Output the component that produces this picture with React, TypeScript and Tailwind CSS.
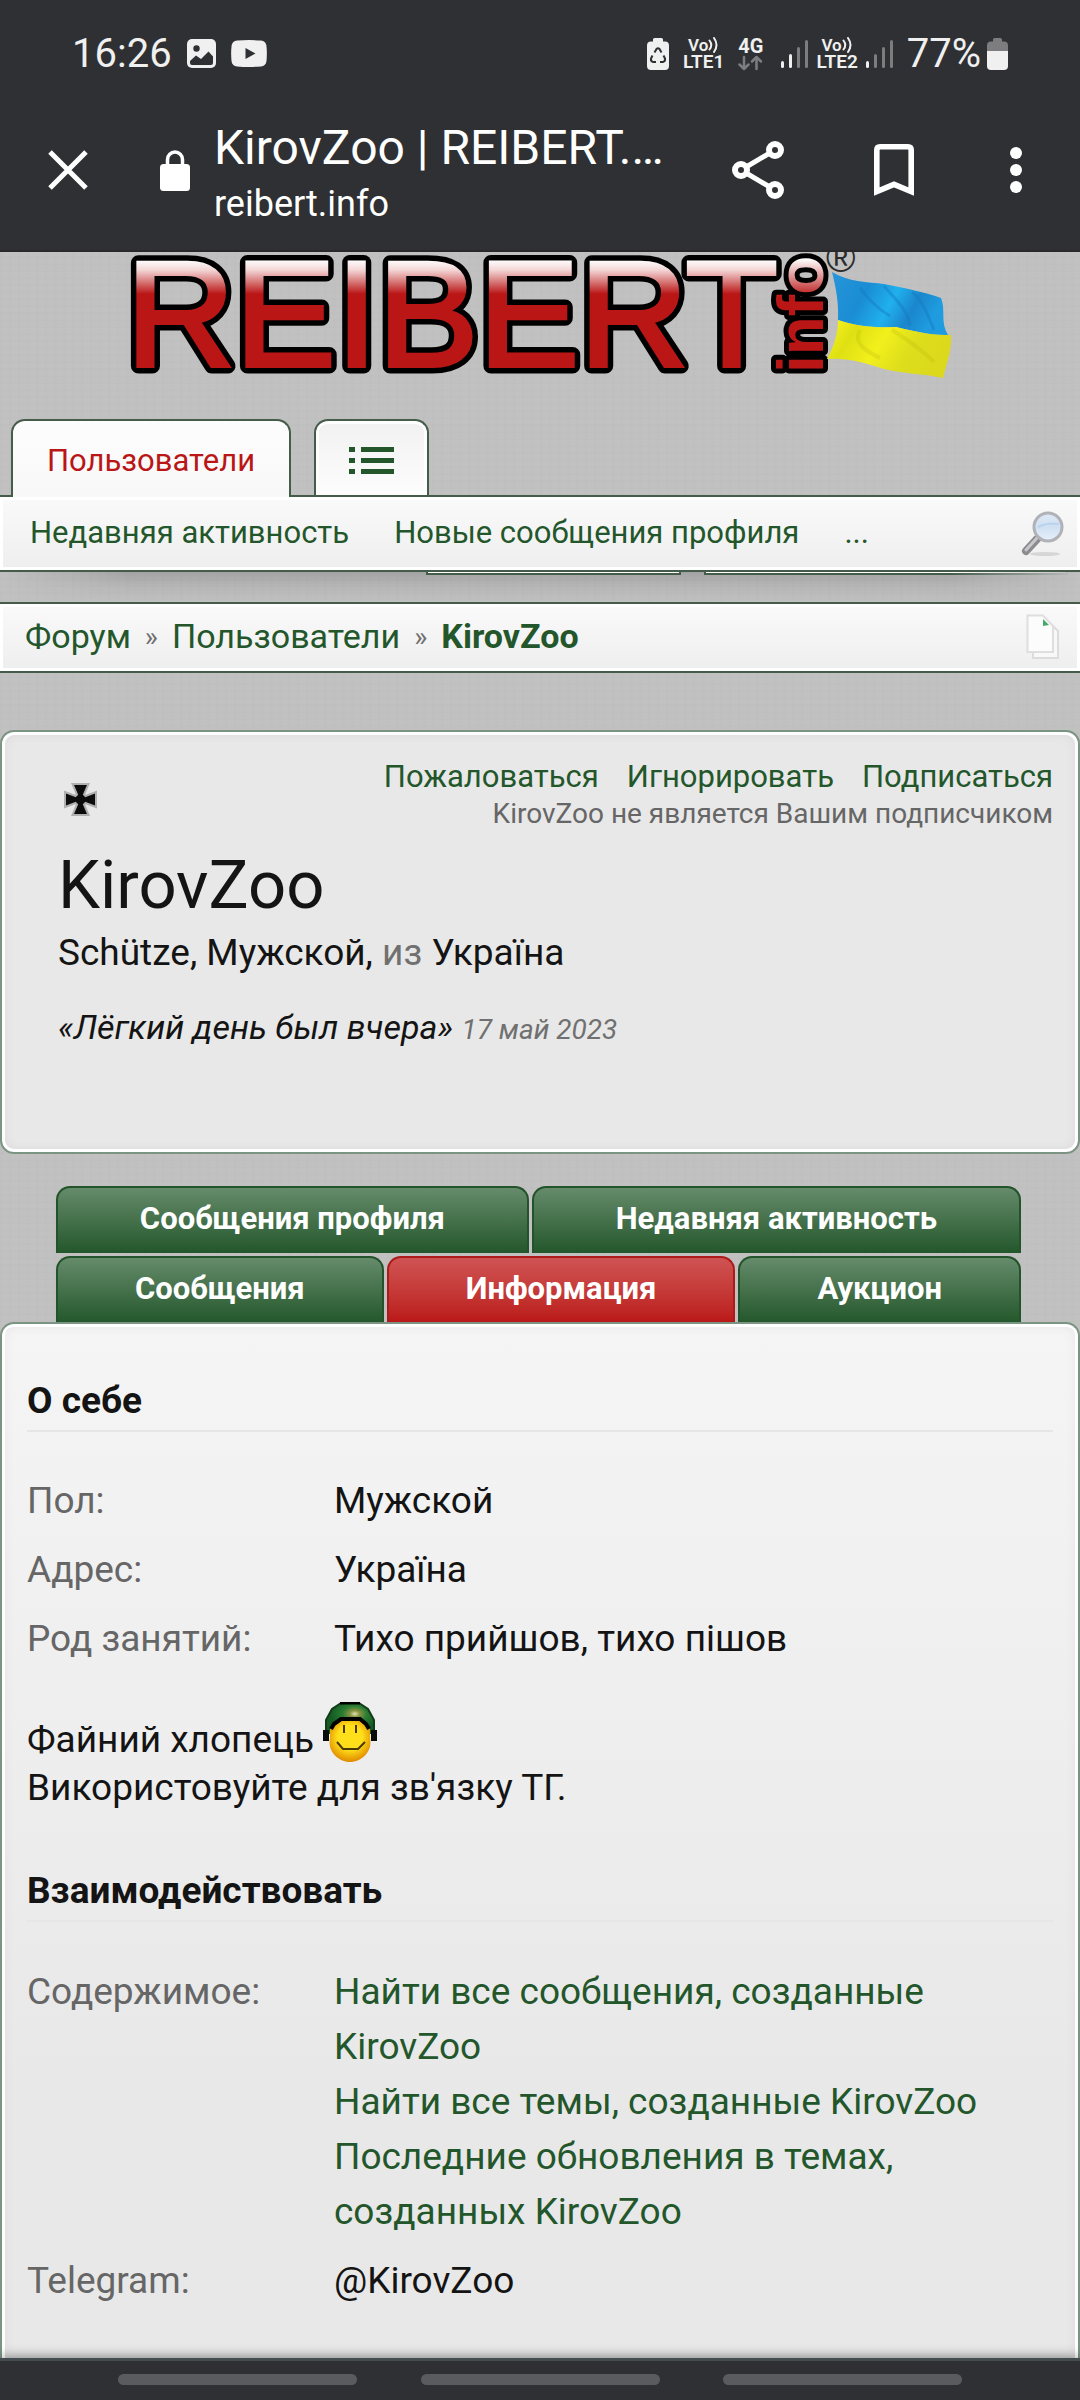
import React from "react";

const profileTabs = [
  [
    { label: "Сообщения профиля", active: false },
    { label: "Недавняя активность", active: false },
  ],
  [
    { label: "Сообщения", active: false },
    { label: "Информация", active: true },
    { label: "Аукцион", active: false },
  ],
];

const aboutRows = [
  { label: "Пол:", value: "Мужской" },
  { label: "Адрес:", value: "Україна" },
  { label: "Род занятий:", value: "Тихо прийшов, тихо пішов" },
];

const contentLinks = [
  "Найти все сообщения, созданные KirovZoo",
  "Найти все темы, созданные KirovZoo",
  "Последние обновления в темах, созданных KirovZoo",
];

function Signal({ level }: { level: number }) {
  return (
    <svg width="27" height="30" viewBox="0 0 27 30">
      {[8, 15, 22, 29].map((h, i) => (
        <rect
          key={h}
          x={i * 8}
          y={30 - h}
          width="3"
          height={h - 1}
          rx="1.5"
          fill={i < level ? "#f0f0f0" : "#7d7d7f"}
        />
      ))}
    </svg>
  );
}

function VoLte({ sim }: { sim: number }) {
  return (
    <div className="flex flex-col items-center font-semibold text-[#f0f0f0]">
      <span className="flex items-center text-[17px] leading-4">
        Vo
        <svg width="11" height="16" viewBox="0 0 11 16">
          <path
            d="M1.500 3.500 Q5 8 1.500 12.500 M6 1 Q11 8 6 15"
            fill="none"
            stroke="#f0f0f0"
            strokeWidth="2"
            strokeLinecap="round"
          />
        </svg>
      </span>
      <span className="text-[19px] leading-[18px]">LTE{sim}</span>
    </div>
  );
}

function StatusBar() {
  return (
    <div className="flex h-[107px] items-center justify-between px-[72px] text-[40px] text-[#f0f0f0]">
      <div className="flex items-center gap-[15px]">
        <span>16:26</span>
        <svg width="29" height="29" viewBox="0 0 29 29">
          <rect width="29" height="29" rx="5" fill="#f0f0f0" />
          <circle cx="9.5" cy="9.5" r="3.2" fill="#2f3033" />
          <path
            d="M3 22 L9 16.5 L14 20 L21.5 12.5 L26 17.5 V24 Q26 26 24 26 H5 Q3 26 3 24 Z"
            fill="#2f3033"
          />
        </svg>
        <svg width="36" height="27" viewBox="0 0 36 27">
          <path
            d="M6 .6 Q18 -.4 30 .6 Q34.6 1 35.4 5.500 Q36.300 13.500 35.400 21.500 Q34.600 26 30 26.400 Q18 27.400 6 26.400 Q1.400 26 .6 21.500 Q-.3 13.500 .6 5.500 Q1.400 1 6 .6 Z"
            fill="#f0f0f0"
          />
          <path d="M14.500 8 L24.500 13.500 L14.500 19 Z" fill="#2f3033" />
        </svg>
      </div>
      <div className="flex items-center gap-[14px]">
        <svg width="22" height="32" viewBox="0 0 22 32">
          <path
            d="M6 3.500 V1.500 Q6 0 7.500 0 H14.500 Q16 0 16 1.500 V3.500 H18 Q22 3.500 22 7.500 V28 Q22 32 18 32 H4 Q0 32 0 28 V7.500 Q0 3.500 4 3.500 Z"
            fill="#f0f0f0"
          />
          <g
            fill="none"
            stroke="#2f3033"
            strokeWidth="2"
            strokeLinejoin="round"
          >
            <path d="M7.500 14.500 L9.500 11 Q11 9.500 12.500 11 L14.500 14.500" />
            <path d="M16.500 17.500 L18 20.500 Q18.500 23.500 16 24 H13" />
            <path d="M5.500 17.500 L4 20.500 Q3.500 23.500 6 24 H9" />
          </g>
        </svg>
        <VoLte sim={1} />
        <div className="mr-1 flex flex-col items-center text-[20px] leading-[18px] font-bold">
          <span>4G</span>
          <svg width="25" height="16" viewBox="0 0 25 16">
            <g
              fill="none"
              stroke="#7d7d7f"
              strokeWidth="2.500"
              strokeLinecap="round"
              strokeLinejoin="round"
            >
              <path d="M6 2 V14 M1.500 9.500 L6 14 L10.500 9.500" />
              <path d="M18.500 14 V2 M14 6.500 L18.500 2 L23 6.500" />
            </g>
          </svg>
        </div>
        <div className="flex items-center gap-2">
          <Signal level={2} />
          <VoLte sim={2} />
          <Signal level={1} />
        </div>
        <div className="flex items-center gap-1.5">
          <span>77%</span>
          <svg width="21" height="32" viewBox="0 0 21 32">
            <path
              d="M6 3.500 V1.500 Q6 0 7.500 0 H13.500 Q15 0 15 1.500 V3.500 H17 Q21 3.500 21 7.500 V13 H0 V7.500 Q0 3.500 4 3.500 Z"
              fill="#7d7d7f"
            />
            <path
              d="M0 13 H21 V28 Q21 32 17 32 H4 Q0 32 0 28 Z"
              fill="#f0f0f0"
            />
          </svg>
        </div>
      </div>
    </div>
  );
}

function BrowserBar() {
  return (
    <div className="flex h-[126px] items-center pr-[46px] pl-12">
      <button type="button" aria-label="Закрыть">
        <svg width="40" height="40" viewBox="0 0 40 40">
          <path
            d="M2 2 L38 38 M38 2 L2 38"
            stroke="#fff"
            strokeWidth="5"
            fill="none"
          />
        </svg>
      </button>
      <svg
        className="ml-[72px] shrink-0"
        width="30"
        height="41"
        viewBox="0 0 30 41"
      >
        <rect y="14" width="30" height="27" rx="3.500" fill="#fff" />
        <path
          d="M7.500 15 V9.500 A7.500 7.500 0 0 1 22.500 9.500 V15"
          fill="none"
          stroke="#fff"
          strokeWidth="3.500"
        />
      </svg>
      <div className="ml-6 min-w-0 pt-1.5 text-white">
        <div className="text-[48px] leading-[56px] whitespace-nowrap">
          KirovZoo | REIBERT.…
        </div>
        <div className="mt-1.5 text-[36px] leading-11">reibert.info</div>
      </div>
      <div className="ml-auto flex items-center">
        <button type="button" aria-label="Поделиться">
          <svg width="52" height="58" viewBox="0 0 52 58">
            <g fill="none" stroke="#fff">
              <path d="M43 9 L9 29 L43 49" strokeWidth="5" />
              <g fill="#2f3033" strokeWidth="6">
                <circle cx="43" cy="9" r="6" />
                <circle cx="9" cy="29" r="6" />
                <circle cx="43" cy="49" r="6" />
              </g>
            </g>
          </svg>
        </button>
        <button type="button" aria-label="Закладка" className="ml-[90px]">
          <svg width="40" height="52" viewBox="0 0 40 52">
            <path
              d="M2.800 47.500 V6 Q2.800 2.800 6 2.800 H34 Q37.200 2.800 37.200 6 V47.500 L20 40.300 Z"
              fill="none"
              stroke="#fff"
              strokeWidth="5.600"
            />
          </svg>
        </button>
        <button
          type="button"
          aria-label="Меню"
          className="ml-[84px] flex w-9 justify-center"
        >
          <svg width="12" height="46" viewBox="0 0 12 46">
            <circle cx="6" cy="6" r="6" fill="#fff" />
            <circle cx="6" cy="23" r="6" fill="#fff" />
            <circle cx="6" cy="40" r="6" fill="#fff" />
          </svg>
        </button>
      </div>
    </div>
  );
}

function Logo() {
  return (
    <svg
      className="mx-auto block max-w-full"
      width="830"
      height="132"
      viewBox="125 252 830 132"
      fontFamily="'Liberation Sans', Arial, sans-serif"
      role="img"
      aria-label="REIBERT.info"
    >
      <defs>
        <linearGradient
          id="logo-red"
          gradientUnits="userSpaceOnUse"
          x1="0"
          y1="260"
          x2="0"
          y2="294"
        >
          <stop offset="0" stopColor="#fff" />
          <stop offset="0.300" stopColor="#f3d4d4" />
          <stop offset="1" stopColor="#ba1616" />
        </linearGradient>
        <linearGradient
          id="info-red"
          gradientUnits="userSpaceOnUse"
          x1="76"
          y1="0"
          x2="114"
          y2="0"
        >
          <stop offset="0" stopColor="#ba1616" />
          <stop offset="1" stopColor="#fff" />
        </linearGradient>
        <linearGradient id="flag-blue" x1="0" y1="0" x2="1" y2="0.300">
          <stop offset="0" stopColor="#2795d8" />
          <stop offset="0.350" stopColor="#1a8dd4" />
          <stop offset="0.600" stopColor="#20b0ee" />
          <stop offset="0.800" stopColor="#1b86cc" />
          <stop offset="1" stopColor="#1f9ce0" />
        </linearGradient>
        <linearGradient id="flag-yellow" x1="0" y1="0" x2="1" y2="0.300">
          <stop offset="0" stopColor="#fbf71e" />
          <stop offset="0.250" stopColor="#dfe013" />
          <stop offset="0.500" stopColor="#f2f01c" />
          <stop offset="0.750" stopColor="#dede1c" />
          <stop offset="1" stopColor="#dcd91c" />
        </linearGradient>
      </defs>
      <g fontSize="151">
        <text
          x="126"
          y="366"
          fill="#000"
          stroke="#000"
          strokeWidth="15"
          strokeLinejoin="round"
        >
          REIBERT
        </text>
        <text
          x="126"
          y="366"
          fill="url(#logo-red)"
          stroke="url(#logo-red)"
          strokeWidth="4"
          strokeLinejoin="miter"
        >
          REIBERT
        </text>
      </g>
      <g
        transform="translate(823 373)"
        fontSize="64"
        fontWeight="bold"
        strokeLinejoin="round"
      >
        <g transform="rotate(-90)">
          <text fill="#000" stroke="#000" strokeWidth="10">
            info
          </text>
          <text fill="url(#info-red)">info</text>
        </g>
      </g>
      <text x="826" y="272" fontSize="40" fill="#2b2b2b">
        ®
      </text>
      <path
        d="M832 272 C848 282 868 282 884 284 C904 288 924 292 941 298 C946 310 940 322 948 335 C930 336 910 330 896 327 C872 328 856 326 838 320 C839 304 836 288 832 272 Z"
        fill="url(#flag-blue)"
      />
      <path
        d="M838 320 C856 326 872 328 896 327 C910 330 930 336 951 335 C952 350 946 366 943 378 C926 374 906 374 884 369 C862 362 848 358 827 359 C834 346 838 334 838 320 Z"
        fill="url(#flag-yellow)"
      />
      <path
        d="M860 288 C868 298 876 308 890 316 M884 286 C896 300 908 310 910 326 M912 292 C924 302 928 316 934 330"
        stroke="#1577bd"
        strokeOpacity="0.400"
        strokeWidth="3"
        fill="none"
      />
      <path
        d="M860 330 C852 344 868 352 880 358 M892 330 C908 340 924 352 934 362"
        stroke="#b9b808"
        strokeOpacity="0.250"
        strokeWidth="4"
        fill="none"
      />
    </svg>
  );
}

function SearchIcon() {
  return (
    <svg width="43" height="46" viewBox="0 0 43 46">
      <defs>
        <linearGradient id="lens" x1="0" y1="0" x2="0" y2="1">
          <stop offset="0" stopColor="#dfe9f5" />
          <stop offset="0.500" stopColor="#cfe0f2" />
          <stop offset="1" stopColor="#e8f0fa" />
        </linearGradient>
      </defs>
      <ellipse cx="24" cy="43" rx="15" ry="2" fill="#d6d6d6" />
      <path
        d="M17 27 L5 40"
        stroke="#8c8c90"
        strokeWidth="8"
        strokeLinecap="round"
      />
      <path
        d="M16 27 L5 39"
        stroke="#c8c8cc"
        strokeWidth="3"
        strokeLinecap="round"
      />
      <circle
        cx="27"
        cy="16"
        r="14"
        fill="url(#lens)"
        stroke="#b0b2b7"
        strokeWidth="3"
      />
      <path d="M17 16 Q27 11 38 13" stroke="#b9d3ee" strokeWidth="2" fill="none" />
    </svg>
  );
}

function PagesIcon() {
  return (
    <svg width="34" height="46" viewBox="0 0 34 46">
      <path
        d="M7 12 H27 L32 17 V44 H7 Z"
        fill="#f8f8f8"
        stroke="#dcdcdc"
        strokeWidth="2"
      />
      <path
        d="M1.500 1.500 H17 L27 12 V38 H1.500 Z"
        fill="#fcfcfc"
        stroke="#dedede"
        strokeWidth="2"
      />
      <path d="M17 5 L23 11 L17 12 Z" fill="#43ab6a" />
    </svg>
  );
}

function Smiley() {
  return (
    <svg
      className="inline-block align-[-10px]"
      width="54"
      height="60"
      viewBox="0 0 54 60"
    >
      <defs>
        <radialGradient id="face" cx="0.500" cy="0.400" r="0.600">
          <stop offset="0.500" stopColor="#ffdf1a" />
          <stop offset="1" stopColor="#e08a00" />
        </radialGradient>
        <radialGradient id="helmet" cx="0.600" cy="0.350" r="0.500">
          <stop offset="0" stopColor="#dfe6b0" />
          <stop offset="0.200" stopColor="#8b9444" />
          <stop offset="0.500" stopColor="#2a7d33" />
          <stop offset="1" stopColor="#155b24" />
        </radialGradient>
      </defs>
      <path
        d="M3 32 V18 L9 7 L18 1 H36 L45 7 L51 18 V32 Z"
        fill="url(#helmet)"
      />
      <path
        d="M3 32 V18 L9 7 L18 1 M36 1 L45 7 L51 18 V32"
        fill="none"
        stroke="#123c1a"
        strokeWidth="2"
      />
      <path d="M17 1 H37" stroke="#000" strokeWidth="3" />
      <path
        d="M7 36 V26 L15 19 H39 L47 26 V36 C50 50 38 60 27 60 C16 60 4 50 7 36 Z"
        fill="url(#face)"
      />
      <path
        d="M8 27 L11 22 L18 17 H37 L43 22 L46 27"
        fill="none"
        stroke="#000"
        strokeWidth="4"
      />
      <path
        d="M21 23 V31 M33 23 V31 M14 40 L20 47 H35 L42 40"
        fill="none"
        stroke="#4a3a00"
        strokeWidth="2"
      />
      <path d="M0 28h6v11H0z M48 28h6v11h-6z" fill="#0a0a0a" />
    </svg>
  );
}

function SectionTitle({ children }: { children: React.ReactNode }) {
  return (
    <h3 className="border-b-2 border-[#e6e6e6] pb-[5px] text-[37px] leading-12 font-bold">
      {children}
    </h3>
  );
}

export default function App() {
  return (
    <div className="flex min-h-screen flex-col bg-[#c1c1c1] bg-[repeating-linear-gradient(0deg,rgba(0,0,0,0.010)_0px,transparent_3px,transparent_7px),repeating-linear-gradient(90deg,rgba(0,0,0,0.010)_0px,transparent_4px,transparent_9px)] font-[Roboto,sans-serif] text-[#141414]">
      <header className="border-b-2 border-[#29292b] bg-[#2f3033] pb-[17px]">
        <StatusBar />
        <BrowserBar />
      </header>

      <main className="flex flex-1 flex-col">
        <a href="#home">
          <Logo />
        </a>

        <nav className="mt-[35px] text-[31px] text-[#23572b]">
          <div className="flex items-end gap-[23px] pl-[11px]">
            <a
              href="#members"
              className="relative -mb-0.5 flex h-[78px] items-center rounded-t-[14px] border-2 border-b-0 border-[#455c4b] bg-gradient-to-b from-[#fdfdfd] to-[#f8f8f8] px-[34px] pt-1 text-[#ba1616]"
            >
              Пользователи
            </a>
            <button
              type="button"
              aria-label="Разделы"
              className="flex h-[76px] w-[115px] items-center justify-center rounded-t-[14px] border-2 border-b-0 border-[#455c4b] bg-gradient-to-b from-[#f1f1f1] to-[#fdfdfd] pt-1 shadow-[inset_0_3px_0_#fff,inset_3px_0_0_#fff,inset_-3px_0_0_#fff]"
            >
              <svg width="45" height="27" viewBox="0 0 45 27" fill="#23572b">
                <path d="M0 0h6v5H0z M12 0h33v5H12z M0 11h6v5H0z M12 11h33v5H12z M0 22h6v5H0z M12 22h33v5H12z" />
              </svg>
            </button>
          </div>
          <div className="flex h-[77px] items-center gap-[45px] border-y-2 border-[#455c4b] bg-gradient-to-b from-[#fafafa] to-[#eeeeee] pr-4 pl-[30px] shadow-[inset_0_0_0_3px_#fff]">
            <a href="#recent">Недавняя активность</a>
            <a href="#posts">Новые сообщения профиля</a>
            <a href="#more">...</a>
            <button type="button" aria-label="Поиск" className="ml-auto">
              <SearchIcon />
            </button>
          </div>
        </nav>

        <div className="h-[30px] bg-gradient-to-b from-black/15 via-black/5 to-transparent [mask-image:linear-gradient(90deg,transparent,#000_12%,#000_88%,transparent)]">
          <div className="flex h-[3px] gap-[23px] pr-3 pl-[426px]">
            <div className="w-[255px] border-2 border-t-0 border-[#455c4b] bg-white" />
            <div className="flex-1 border-2 border-t-0 border-[#455c4b] bg-white" />
          </div>
        </div>

        <nav className="flex h-[71px] items-center gap-3.5 border-y-2 border-[#455c4b] bg-gradient-to-b from-[#fafafa] to-[#eeeeee] pr-5 pb-0.5 pl-[25px] text-[34px] text-[#23572b] shadow-[inset_0_0_0_3px_#fff]">
          <a href="#forum">Форум</a>
          <span className="text-[28px] text-[#707070]">»</span>
          <a href="#members">Пользователи</a>
          <span className="text-[28px] text-[#707070]">»</span>
          <a href="#profile" className="font-bold">
            KirovZoo
          </a>
          <button type="button" aria-label="Страницы" className="ml-auto">
            <PagesIcon />
          </button>
        </nav>

        <section className="mt-[57px] rounded-[14px] border-2 border-[#7b9483] bg-[#e8e8e8] px-[25px] pt-[26px] pb-[103px] shadow-[inset_0_0_0_3px_#fff,inset_0_0_14px_rgba(0,0,0,0.080)]">
          <div className="flex items-start justify-between">
            <svg
              className="mt-[25px] ml-[37px]"
              width="33"
              height="33"
              viewBox="0 0 33 33"
            >
              <path
                d="M8.500 1 H24.500 L20 11.500 L21.500 13 L32 9 V24 L21.500 20 L20 21.500 L24.500 32 H8.500 L13 21.500 L11.500 20 L1 24 V9 L11.500 13 L13 11.500 Z"
                fill="#0c0c0c"
                stroke="#b0b0b0"
                strokeWidth="2"
              />
            </svg>
            <div className="text-right">
              <div className="flex justify-end gap-7 text-[31px] leading-[38px] text-[#23572b]">
                <a href="#report">Пожаловаться</a>
                <a href="#ignore">Игнорировать</a>
                <a href="#follow">Подписаться</a>
              </div>
              <p className="text-[28px] leading-9 text-[#666666]">
                KirovZoo не является Вашим подписчиком
              </p>
            </div>
          </div>
          <div className="pl-[31px]">
            <h1 className="mt-[13px] text-[67px] leading-20">KirovZoo</h1>
            <p className="mt-1 text-[37px] leading-12">
              Schütze, Мужской, <span className="text-[#707070]">из</span>{" "}
              <a href="#location">Україна</a>
            </p>
            <p className="mt-7 text-[34px] leading-11 italic">
              «Лёгкий день был вчера»{" "}
              <span className="text-[28px] leading-none text-[#707070]">
                17 май 2023
              </span>
            </p>
          </div>
        </section>

        <div className="mt-8 flex flex-col gap-[3px] pr-[59px] pl-14">
          {profileTabs.map((row, i) => (
            <div key={i} className="flex gap-[3px]">
              {row.map((tab) => (
                <a
                  key={tab.label}
                  href="#tab"
                  className={`flex h-[67px] flex-auto items-center justify-center rounded-t-[14px] border-2 border-b-0 pb-0.5 text-[31px] font-bold text-white ${
                    tab.active
                      ? "border-[#ad1a1a] bg-gradient-to-b from-[#cf5353] to-[#ba1616]"
                      : "border-[#23532b] bg-gradient-to-b from-[#658b6b] to-[#23572b]"
                  }`}
                >
                  {tab.label}
                </a>
              ))}
            </div>
          ))}
        </div>

        <section className="relative -mt-px flex-1 rounded-t-[14px] border-2 border-b-0 border-[#7b9483] bg-gradient-to-b from-[#f5f5f5] to-[#e8e8e8] to-75% px-[25px] pt-[53px] pb-9 text-[37px] shadow-[inset_3px_0_0_#fff,inset_-3px_0_0_#fff,inset_0_3px_0_#fff,inset_0_0_14px_rgba(0,0,0,0.080)]">
          <SectionTitle>О себе</SectionTitle>
          <dl className="mt-[41px] grid grid-cols-[307px_1fr] gap-y-3.5 leading-[55px]">
            {aboutRows.map((row) => (
              <React.Fragment key={row.label}>
                <dt className="text-[#666666]">{row.label}</dt>
                <dd>{row.value}</dd>
              </React.Fragment>
            ))}
          </dl>
          <p className="mt-9 leading-12">
            Файний хлопець <Smiley />
            <br />
            Використовуйте для зв'язку ТГ.
          </p>

          <div className="mt-[55px]">
            <SectionTitle>Взаимодействовать</SectionTitle>
          </div>
          <dl className="mt-[42px] grid grid-cols-[307px_1fr] gap-y-3.5 leading-[55px]">
            <dt className="text-[#666666]">Содержимое:</dt>
            <dd className="text-[#23572b]">
              <ul className="max-w-[660px]">
                {contentLinks.map((text) => (
                  <li key={text}>
                    <a href="#search">{text}</a>
                  </li>
                ))}
              </ul>
            </dd>
            <dt className="text-[#666666]">Telegram:</dt>
            <dd>@KirovZoo</dd>
          </dl>
        </section>
      </main>

      <footer className="relative flex h-[42px] items-start justify-between border-t-3 border-[#454c50] bg-[#2f3033] px-[118px] pt-[13px] shadow-[0_-2px_10px_rgba(0,0,0,0.350)]">
        <div className="h-[11px] w-[239px] rounded-full bg-[#5a5b5e]" />
        <div className="h-[11px] w-[239px] rounded-full bg-[#5a5b5e]" />
        <div className="h-[11px] w-[239px] rounded-full bg-[#5a5b5e]" />
      </footer>
    </div>
  );
}
